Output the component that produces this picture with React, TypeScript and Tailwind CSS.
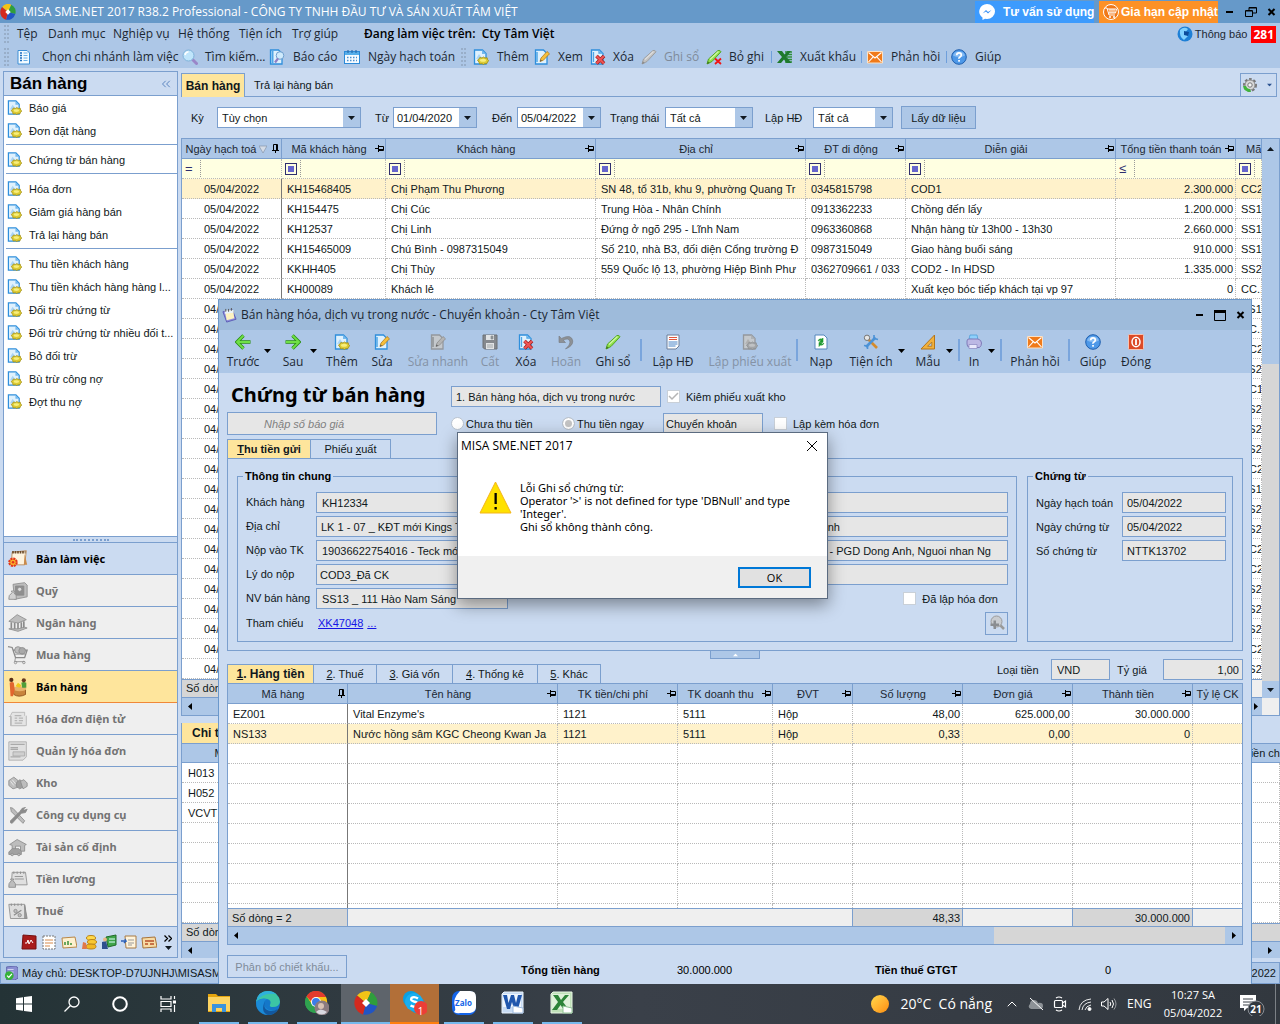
import React from 'react';
import {ChevronsLeft, ChevronUp} from "lucide-react";

type IconProps = { className?: string };

const DocBase = ({ gray }: { gray?: boolean }) => (
    <path d="M1.500 1h8l3.500 3.500v10.500h-11.500z" fill={gray ? '#c4c8cc' : '#dff1fd'} stroke={gray ? '#94989d' : '#2f8fdc'} strokeWidth="1.300"/>
);

const NewIcon = ({ className = 'size-4', gray }: IconProps & { gray?: boolean }) => (
    <svg className={`${className} shrink-0`} viewBox="0 0 16 16">
        <DocBase gray={gray}/>
        <path d="M9 1v4h4" fill={gray ? '#aeb2b6' : '#74b9ee'}/>
        <path d="M3 10l3-5 3 4" fill={gray ? '#b0b0b0' : '#a9d4f5'}/>
        <path d="M4.500 11l1.500-1 .8-1.500 2.200.5 1.500-1 1.500 1 2.200-.2.300 1.700 1.300 1.200-1.300 1.300-.5 1.500-2.500.3-1 .7-1.500-.8-2.500.2-.5-1.700z"
              fill={gray ? '#a2a5a8' : '#dccb34'} stroke={gray ? '#8b8e91' : '#a08c12'} strokeWidth=".8"/>
        <ellipse cx="10" cy="11.300" rx="3" ry="1.500" fill={gray ? '#c0c2c4' : '#f7ee7c'}/>
    </svg>
);

const EditIcon = ({ className = 'size-4', gray }: IconProps & { gray?: boolean }) => (
    <svg className={`${className} shrink-0`} viewBox="0 0 16 16">
        <DocBase gray={gray}/>
        <path d="M3 3v10" stroke={gray ? '#8c9094' : '#4fa6e6'} strokeWidth="1.500"/>
        <path d="M6 12.500l1-3.500 6-6.500 2.500 2.300-6.200 6.500z" fill={gray ? '#b4b4b4' : '#f6bf3a'} stroke={gray ? '#8b8b8b' : '#b07a1c'} strokeWidth=".8"/>
        <path d="M6 12.500l.6-2 1.400 1.300z" fill="#555"/>
    </svg>
);

const DeleteIcon = ({ className = 'size-4' }: IconProps) => (
    <svg className={`${className} shrink-0`} viewBox="0 0 16 16">
        <DocBase/>
        <path d="M3.500 3v10M9 1v3h4" stroke="#4fa6e6" fill="none" strokeWidth="1.300"/>
        <path d="M6.500 7l7.500 7.500M14 7l-7.500 7.500" stroke="#9c1b1b" strokeWidth="3.600"/>
        <path d="M6.500 7l7.500 7.500M14 7l-7.500 7.500" stroke="#ee5454" strokeWidth="2.200"/>
    </svg>
);

const PenIcon = ({ gray, cross }: { gray?: boolean; cross?: boolean }) => (
    <svg className="size-4 shrink-0" viewBox="0 0 16 16">
        <path d="M1 15l1.500-5L12 1.500q2-.7 3 1.300L6 12.500z" fill={gray ? '#c2c2c2' : '#8fe04a'} stroke={gray ? '#9a9a9a' : '#4c9f1c'} strokeWidth=".9"/>
        <path d="M4 10.500l8.500-8" stroke={gray ? '#dedede' : '#d0f7a6'} strokeWidth="1.200"/>
        <path d="M1 15l.8-2.800 2 1.700z" fill={gray ? '#8a8a8a' : '#3f7a1c'}/>
        {cross && <path d="M9 9.500l6 5.500M15 9.500L9 15" stroke="#f01414" strokeWidth="1.800"/>}
    </svg>
);

const MailIcon = () => (
    <svg className="size-4 shrink-0" viewBox="0 0 16 16">
        <path d="M.5 2.500h15v11.500H.5z" fill="#f07a1a" stroke="#fbe1c4"/>
        <path d="M1.500 3.500L8 9l6.500-5.500M1.500 13l4.700-5.200M14.500 13L9.800 7.800" fill="none" stroke="#fff" strokeWidth="1.100"/>
    </svg>
);

const HelpIcon = () => (
    <svg className="size-4 shrink-0" viewBox="0 0 16 16">
        <circle cx="8" cy="8" r="7.300" fill="#4d98e8" stroke="#1f5fae"/>
        <path d="M2 6.500a6.200 5.500 0 0 1 12 0q-6 3-12 0z" fill="#9bc9f8" opacity=".7"/>
        <path d="M5.700 6.300Q5.700 3.800 8 3.800t2.300 2.200q0 1.300-1.300 2T8 9.800" fill="none" stroke="#fff" strokeWidth="1.700"/>
        <rect x="7.200" y="11" width="1.700" height="1.700" fill="#fff"/>
    </svg>
);

const SearchIcon = () => (
    <svg className="size-4 shrink-0" viewBox="0 0 16 16">
        <path d="M10.500 10.500l4 4" stroke="#9a86c8" strokeWidth="3" strokeLinecap="round"/>
        <circle cx="6.500" cy="6.500" r="5.500" fill="#bfe5fb" stroke="#7fb2d9"/>
        <path d="M3 6q.5-3 3.500-3.300" fill="none" stroke="#fff" strokeWidth="1.600"/>
    </svg>
);

const BranchIcon = () => (
    <svg className="size-4 shrink-0" viewBox="0 0 16 16">
        <path d="M2 1.500h9l2.500 2.500v11H2z" fill="#f4fbff" stroke="#3d8fd6"/>
        <path d="M4 4h2M4 6.500h2M4 9h2M4 11.500h2" stroke="#1f6fc0" strokeWidth="1.400"/>
        <path d="M7.500 4h4M7.500 6.500h4M7.500 9h4M7.500 11.500h4" stroke="#69aee6"/>
    </svg>
);

const ReportIcon = () => (
    <svg className="size-4 shrink-0" viewBox="0 0 16 16">
        <DocBase/>
        <path d="M3.500 2v12" stroke="#4fa6e6" strokeWidth="2"/>
        <circle cx="11" cy="6.500" r="3.800" fill="#cfeafc" stroke="#6f9fce"/>
        <path d="M9 9.500l-3 4" stroke="#8f7fc4" strokeWidth="2.200"/>
    </svg>
);

const CalendarIcon = () => (
    <svg className="size-4 shrink-0" viewBox="0 0 16 16">
        <rect x=".5" y="2.500" width="15" height="12" fill="#f6fbff" stroke="#2c8ad8"/>
        <path d="M1 3h14v3H1z" fill="#56aeea"/>
        <path d="M4 1v3M8 1v3M12 1v3" stroke="#2c6cab" strokeWidth="1.200"/>
        <path d="M3 8.500h10M3 11.500h10" stroke="#4a90d0" strokeWidth="1.500" strokeDasharray="1.500 1.500"/>
    </svg>
);

const ExcelMark = () => (
    <svg className="size-4 shrink-0" viewBox="0 0 16 16">
        <path d="M8 3h7M9 5.500h6M10 8h5M9 10.500h6M8 13h7" stroke="#2f8f3a" strokeWidth="1.300"/>
        <path d="M0 2h5l2.500 3.500L10.500 2H14L9.500 8l5 6h-5L7 10.500 4 14H0l5-6z" fill="#1f7a2c"/>
    </svg>
);

const BackIcon = ({ flip }: { flip?: boolean }) => (
    <svg className="size-4" viewBox="0 0 16 16" fill="none">
        <path d={flip ? 'M0.500 8h13M7.500 1.500L14 8l-6.500 6.500' : 'M15.500 8H2.500M8.500 1.500L2 8l6.500 6.500'} stroke="#2b8f14" strokeWidth="3.400"/>
        <path d={flip ? 'M1 8h12.500M7.500 1.500L14 8l-6.500 6.500' : 'M15 8H2.500M8.500 1.500L2 8l6.500 6.500'} stroke="#6fe046" strokeWidth="1.800"/>
    </svg>
);

const SaveIcon = () => (
    <svg className="size-4" viewBox="0 0 16 16">
        <path d="M1 1h14v14H2.500L1 13.500z" fill="#85898e" stroke="#6c7075"/>
        <path d="M4 1h8v5H4zM4 9h8v6H4z" fill="#e1e3e5"/><path d="M9 2h2v3H9zM5 11h6M5 13h6" stroke="#8b8f94" fill="#8b8f94" strokeWidth=".7"/>
    </svg>
);

const UndoIcon = () => (
    <svg className="size-4" viewBox="0 0 16 16">
        <path d="M1 2v6.500h6.500L5.300 6.300Q11 3 12 8q.3 3-4.500 7Q15 12 14.800 7 13.500-.5 3.500 4.400z" fill="#8d9196" stroke="#75797e" strokeWidth=".6"/>
    </svg>
);

const InvoiceIcon = () => (
    <svg className="size-4" viewBox="0 0 16 16">
        <path d="M2 1h12v11l-3 3H2z" fill="#fdfdfd" stroke="#6c7f99"/>
        <path d="M4 3.500h8M4 5.500h8" stroke="#e0573d"/><path d="M3.500 8h9M3.500 10h9M3.500 12h7" stroke="#4a86c8"/>
    </svg>
);

const ReloadIcon = () => (
    <svg className="size-4" viewBox="0 0 16 16">
        <path d="M2 1h9l3 3v11H2z" fill="#fff" stroke="#5587bd"/>
        <path d="M5 7q1-3 4-2l1-1v4H6.500L8 6.500q-1.500-.5-3 .5zM11 9q-1 3-4 2l-1 1.500V8.500h3.500L8 10q1.500.5 3-1z" fill="#1f9a2f" stroke="#1f9a2f" strokeWidth=".6"/>
    </svg>
);

const ToolsIcon = () => (
    <svg className="size-4" viewBox="0 0 16 16">
        <path d="M4 4l10 10" stroke="#d58b2c" strokeWidth="2.600"/><path d="M12.500 3.500L3 13" stroke="#4c92d6" strokeWidth="2.600"/>
        <circle cx="4" cy="3.800" r="2.700" fill="#e6e6e6" stroke="#777"/><path d="M11 1v3.500l4 1M1 11.500l3.500.5v3" fill="none" stroke="#4c92d6" strokeWidth="1.600"/>
    </svg>
);

const RulerIcon = () => (
    <svg className="size-4" viewBox="0 0 16 16">
        <path d="M14.500 1v14H1z" fill="#f2b13c" stroke="#b3751a"/><path d="M11.800 8v4.300H7.500z" fill="#adc7e7" stroke="#b3751a" strokeWidth=".8"/>
    </svg>
);

const PrintIcon = () => (
    <svg className="size-4" viewBox="0 0 16 16">
        <path d="M3 5l1-4h7l1 5z" fill="#8fd0fb" stroke="#4f9ed8" strokeWidth=".8"/>
        <path d="M1 7q0-2 2-2h9q3.500 1 3.500 4t-2 4.500H4Q.8 13 1 10z" fill="#bcb8e4" stroke="#7f7bb8"/>
        <path d="M3 10.500h8v4H3z" fill="#e9e8fb" stroke="#8a86c0" strokeWidth=".7"/>
    </svg>
);

const PowerIcon = () => (
    <svg className="size-4" viewBox="0 0 16 16">
        <rect x=".5" y=".5" width="15" height="15" rx="1" fill="#dc4a26" stroke="#f7c4b3"/>
        <ellipse cx="8" cy="8" rx="4" ry="4.800" fill="none" stroke="#fff" strokeWidth="1.500"/><path d="M8 5v6" stroke="#fff" strokeWidth="1.800"/>
    </svg>
);

const MisaLogo = ({ className = 'size-4' }: IconProps) => (
    <svg className={`${className} shrink-0`} viewBox="0 0 24 24">
        <path d="M12 12L3 4.500A12 12 0 0 1 17 1z" fill="#f2c417"/>
        <path d="M12 12l5-11a12 12 0 0 1 6 14z" fill="#2f9e3c"/>
        <path d="M12 12l11 3a12 12 0 0 1-14 8.500z" fill="#2155c4"/>
        <path d="M12 12L9 23.500A12 12 0 0 1 3 4.500z" fill="#d42a1e"/>
        <path d="M12 8l4 4-4 4-4-4z" fill="#fff"/>
    </svg>
);

const Caret = ({ className = '' }: IconProps) => (
    <svg className={`h-1 w-[7px] shrink-0 ${className}`} viewBox="0 0 7 4"><path d="M0 0h7L3.500 4z" fill="currentColor"/></svg>
);

const SideCaret = ({ right }: { right?: boolean }) => (
    <svg className="h-[7px] w-1 shrink-0" viewBox="0 0 4 7"><path d={right ? 'M0 0v7l4-3.500z' : 'M4 0v7L0 3.500z'}/></svg>
);

const Pin = ({ up }: { up?: boolean }) => (
    <svg className="h-[9px] w-[9px] shrink-0" viewBox="0 0 9 9" fill="none" stroke="#000">
        {up ? <path d="M2.500 6V.5h4V6M1 6.500h7M4.500 6.500V9M5.500 1v5"/> : <path d="M0 4.500h3M3.500 1v7M3.500 2.500h5v4h-5M4 5.500h4.500"/>}
    </svg>
);

const Grip = () => (
    <span className="flex h-[18px] gap-[1px]"><span className="border-l-2 border-dotted border-[#98aec9]"/><span className="border-l-2 border-dotted border-[#98aec9]"/></span>
);

const sideGroups = [
    ['Báo giá', 'Đơn đặt hàng'],
    ['Chứng từ bán hàng'],
    ['Hóa đơn', 'Giảm giá hàng bán', 'Trả lại hàng bán'],
    ['Thu tiền khách hàng', 'Thu tiền khách hàng hàng l...', 'Đối trừ chứng từ', 'Đối trừ chứng từ nhiều đối t...', 'Bỏ đối trừ', 'Bù trừ công nợ', 'Đợt thu nợ'],
];

const g = { fill: '#bdbdbd', stroke: '#8b8b8b' };
const modules = [
    { name: 'Bàn làm việc', icon: <><path d="M5 4l17-2-2 17H4z" fill="#fdf3df" stroke="#b98550"/><path d="M5 4h16" stroke="#6a4a2a" strokeWidth="3" strokeDasharray="2 1"/><path d="M20 6l3 13h-4z" fill="#c98a4a"/><circle cx="6" cy="16" r="4.500" fill="#f9b52b" stroke="#e2341c" strokeWidth="2.500" strokeDasharray="2.500 1"/><circle cx="6" cy="16" r="1.500" fill="#e2341c"/></> },
    { name: 'Quỹ', icon: <g {...g}><path d="M6 4l14-2 3 3v14l-15 3z"/><path d="M9 6h10v11H9z" fill="#8f8f8f"/><circle cx="14" cy="10" r="2.500" fill="#ddd"/><path d="M4 12h4l-1 2q4 3 3 8H1q-1-5 4-8z" fill="#d2d2d2"/></g> },
    { name: 'Ngân hàng', icon: <g {...g}><path d="M1 10L11 2l11 6-10 4z"/><path d="M4 11v8M8 12v8M12 12v9M16 11v8M19 10v8" strokeWidth="2"/><path d="M1 19l11 3 11-4-3-1-8 2z"/></g> },
    { name: 'Mua hàng', icon: <g {...g} fill="none"><path d="M0 2l5 1 4 12h11l3-9H6" strokeWidth="1.500"/><circle cx="12" cy="6" r="4" fill="#bdbdbd"/><circle cx="17" cy="7" r="4" fill="#a9a9a9"/><path d="M9 15l-1 5h12M8 11h13"/><circle cx="9" cy="21" r="1.500"/><circle cx="19" cy="21" r="1.500"/></g> },
    { name: 'Bán hàng', icon: <><path d="M6 15q8-5 15 0v6q-8 4-14 0z" fill="#c8843c" stroke="#8b4e1a"/><ellipse cx="14" cy="14" rx="8" ry="3" fill="#e8b36c"/><path d="M2 7q3-2 5 0l1 8-2 8H3z" fill="#e2662e"/><circle cx="4" cy="3.500" r="2.500" fill="#5a2f17"/><path d="M9 11l3-4 4 3-2 3z" fill="#f0c81c"/><path d="M16 7q3-2 6 0v6h-5z" fill="#4f9e3a"/><circle cx="19" cy="4" r="2.500" fill="#6b3a1c"/></> },
    { name: 'Hóa đơn điện tử', icon: <g fill="#e4e4e4" stroke="#b5b5b5"><path d="M5 4h15v16H3V8z"/><path d="M1 9h3v11h18V8"/><path d="M8 8h8M8 11h3M13 11h5M8 14h3M13 14h5M8 17h9" strokeWidth="1.500"/></g> },
    { name: 'Quản lý hóa đơn', icon: <g fill="#e0e0e0" stroke="#aaa"><path d="M1 1h21v18l-4 4H1z"/><path d="M3 4h17M3 8h9M3 10h9M3 19h12" strokeWidth="1.500"/><path d="M6 13h14v5H6z" fill="#cfcfcf"/></g> },
    { name: 'Kho', icon: <g {...g}><path d="M1 9l6-4 5 4v8l-6 2-5-4z"/><path d="M10 12l4-4 4 3v6l-4 2-4-3z" fill="#9e9e9e"/><path d="M15 10l4-2 4 4v4l-5 3z"/><path d="M3 10l4 5M5 8l4 5" stroke="#eee"/></g> },
    { name: 'Công cụ dụng cụ', icon: <g {...g}><path d="M3 3l3 1 14 15-2 3L4 8z"/><path d="M21 3l-4 1-3 4-11 11q-1 3 2 3l11-12 5-1 2-4-3 1-2-1z" fill="#8a8a8a"/></g> },
    { name: 'Tài sản cố định', icon: <g {...g}><path d="M2 9l9-6 11 6-2 1v7H5v-7z"/><path d="M9 11h6v6H9z" fill="#eee"/><path d="M1 18l4-4h8l3 3v4H1z" fill="#a2a2a2"/><circle cx="5" cy="21" r="1.500"/><circle cx="13" cy="21" r="1.500"/></g> },
    { name: 'Tiền lương', icon: <g {...g}><path d="M5 4h16l2 15H4z" fill="#e0e0e0"/><path d="M7 3v3M11 3v3M15 3v3M19 3v3M8 9h10M8 12h11"/><path d="M3 12h4l-1 2q4 3 3 8H1q-1-5 3-8z"/></g> },
    { name: 'Thuế', icon: <g {...g}><path d="M1 4h19l2 17H3z" fill="#dedede"/><path d="M20 5l3 16h-3z" fill="#999"/><path d="M4 3v3M8 3v3M12 3v3M16 3v3"/><path d="M7 17l9-6" strokeWidth="1.500"/><circle cx="9" cy="12" r="2"/><circle cx="14" cy="17" r="2"/></g> },
];

const trayIcons = [
    <g key="a"><path d="M2 1l13 1v13H1z" fill="#a81c1c" stroke="#741010"/><path d="M4 9h2l1-3 1 4 2-4 2 3" stroke="#fff" fill="none"/></g>,
    <g key="b"><path d="M2 2h12v13H2z" fill="#fff" stroke="#777" strokeDasharray="2 1"/><path d="M4 6h8M4 9h8M4 12h5" stroke="#d78a4c"/></g>,
    <g key="c"><path d="M1 4l13-1 2 10-14 1z" fill="#fdf0cf" stroke="#b98748"/><path d="M4 11V8M7 11V7M10 11V9" stroke="#3a8e3a" strokeWidth="1.500"/></g>,
    <g key="d"><ellipse cx="10" cy="4" rx="4.500" ry="2.500" fill="#ffd94a" stroke="#b98318"/><ellipse cx="11" cy="8" rx="4.500" ry="2.500" fill="#f9c832" stroke="#b98318"/><ellipse cx="10" cy="12.500" rx="5" ry="2.500" fill="#f2b822" stroke="#b98318"/><path d="M1 15l1-7 3 1 1 6z" fill="#e0784a"/></g>,
    <g key="e"><path d="M5 3l10-2v10L7 13z" fill="#3fa64a" stroke="#226b2a"/><path d="M8 5h6M8 8h6" stroke="#dff"/><path d="M1 15V8l4-1 2 8z" fill="#2f4f8f"/><circle cx="4" cy="5.500" r="2" fill="#e8b988"/></g>,
    <g key="f"><path d="M4 2h11v12H5z" fill="#fff4dc" stroke="#a87a44"/><path d="M7 6h6M7 9h6M7 11h4" stroke="#999"/><path d="M0 7h5L4 5M5 7l-2 2" stroke="#2f62b8" strokeWidth="1.500" fill="none"/></g>,
    <g key="g"><path d="M1 4l13-1 2 10-14 1z" fill="#f7dba4" stroke="#a8743a"/><path d="M4 10h3M9 10h4M4 7h9" stroke="#b8502a" strokeWidth="1.500"/></g>,
];

const HomeMenu = () => (
    <header className="shrink-0 bg-[#adc7e7] font-['Open_Sans','Noto_Sans',sans-serif] text-[12px] text-[#1c2733]">
        <div className="flex h-[23px] items-center bg-[#6699c9] text-white">
            <MisaLogo className="size-4"/>
            <h1 className="ml-[7px] flex-1 truncate text-[12px]">MISA SME.NET 2017 R38.2 Professional - CÔNG TY TNHH ĐẦU TƯ VÀ SẢN XUẤT TÂM VIỆT</h1>
            <button className="flex h-[22px] w-[119px] shrink-0 items-center bg-[#3d9bfd] pl-1 font-['Liberation_Sans',sans-serif] font-bold whitespace-nowrap">
                <svg className="mr-2 size-4 shrink-0" viewBox="0 0 16 16">
                    <path d="M8 0a8 7.500 0 0 1 0 15l-2-.3L3.500 16v-2.500A8 7.500 0 0 1 8 0z" fill="#fff"/>
                    <path d="M3.500 9.500L7 6l2 2 3.500-2L9 9.500l-2-2z" fill="#2f8cf5"/>
                </svg>
                Tư vấn sử dụng
            </button>
            <button className="ml-[5px] flex h-[22px] w-[119px] shrink-0 items-center bg-[#fd9126] pl-1 font-['Liberation_Sans',sans-serif] font-bold whitespace-nowrap">
                <svg className="mr-[2px] size-4 shrink-0" viewBox="0 0 16 16" fill="none" stroke="#fff">
                    <circle cx="8" cy="8" r="7.500" fill="#f07818"/>
                    <path d="M2 4h2l2 7h6M4.500 5h9l-1 4H5.500M7 5v4M9 5v4M11 5v4"/><path d="M6 13h2M10 13h2" strokeWidth="1.600"/>
                </svg>
                Gia hạn cập nhật
            </button>
            <div className="flex w-[62px] items-center justify-between pl-2 pr-1">
                <button aria-label="Thu nhỏ"><svg className="h-3 w-2" viewBox="0 0 8 12"><path d="M0 6h7" stroke="#000" strokeWidth="2"/></svg></button>
                <button aria-label="Khôi phục"><svg className="size-3" viewBox="0 0 12 12" fill="none" stroke="#000"><path d="M4 4V1.500h7.500V7H8M.5 4.500h7v6h-7zM4 2h7M1 5h6"/></svg></button>
                <button aria-label="Đóng"><svg className="h-2 w-[9px]" viewBox="0 0 9 8"><path d="M1.500 1l6 6M7.500 1l-6 6" stroke="#000" strokeWidth="2"/></svg></button>
            </div>
        </div>
        <div className="flex h-[22px] items-center pl-1">
            <span className="w-[13px]"><Grip/></span>
            <button className="w-[31px] text-left">Tệp</button>
            <button className="w-[65px] whitespace-nowrap text-left">Danh mục</button>
            <button className="w-[65px] whitespace-nowrap text-left">Nghiệp vụ</button>
            <button className="w-[61px] whitespace-nowrap text-left">Hệ thống</button>
            <button className="w-[53px] whitespace-nowrap text-left">Tiện ích</button>
            <button className="w-[72px] whitespace-nowrap text-left">Trợ giúp</button>
            <span className="flex-1 whitespace-pre font-semibold text-black">Đang làm việc trên:  Cty Tâm Việt</span>
            <svg className="size-4" viewBox="0 0 16 16"><circle cx="8" cy="8" r="7.500" fill="#1d7fd6"/><path d="M3 4q4-4 8-1L8 7l3 3-4 4q-5-3-4-10z" fill="#7fd0ff"/><path d="M7 5l5 1-1 4-4-1z" fill="#0c4c9c"/></svg>
            <button className="ml-[2px] font-['Liberation_Sans',sans-serif] text-[11px]">Thông báo</button>
            <span className="mr-1 ml-1 bg-[#ff0000] px-[2px] text-[12px] leading-[17px] font-bold text-white">281</span>
        </div>
        <div className="flex h-[23px] items-center overflow-hidden whitespace-nowrap pl-1">
            <span className="w-3 shrink-0"><Grip/></span>
            <button className="flex w-[166px] items-center gap-[10px]"><BranchIcon/>Chọn chi nhánh làm việc</button>
            <button className="flex w-[87px] items-center gap-[7px]"><SearchIcon/>Tìm kiếm...</button>
            <button className="flex w-[75px] items-center gap-2"><ReportIcon/>Báo cáo</button>
            <button className="flex w-[117px] items-center gap-2"><CalendarIcon/>Ngày hạch toán</button>
            <span className="w-3 shrink-0"><Grip/></span>
            <button className="flex w-[61px] items-center gap-2"><NewIcon/>Thêm</button>
            <button className="flex w-[56px] items-center gap-2"><EditIcon/>Xem</button>
            <button className="flex w-[51px] items-center gap-[7px]"><DeleteIcon/>Xóa</button>
            <button className="flex w-[65px] items-center gap-[7px] text-[#7f8b9a]"><PenIcon gray/>Ghi sổ</button>
            <button className="flex w-[65px] items-center gap-[7px]"><PenIcon cross/>Bỏ ghi</button>
            <span className="h-3 w-[6px] border-l border-[#6f9fdb]"/>
            <button className="flex w-[84px] items-center gap-[7px]"><ExcelMark/>Xuất khẩu</button>
            <span className="h-3 w-[6px] border-l border-[#6f9fdb]"/>
            <button className="flex w-[79px] items-center gap-2"><MailIcon/>Phản hồi</button>
            <span className="h-3 w-[5px] border-l border-[#6f9fdb]"/>
            <button className="flex items-center gap-2"><HelpIcon/>Giúp</button>
        </div>
    </header>
);

const Sidebar = () => (
    <aside className="flex w-[175px] shrink-0 flex-col border border-[#7b9fce] bg-[#cbdbf1]">
        <div className="flex h-6 shrink-0 items-center justify-between border-b border-[#7b9fce] pl-[6px] pr-1">
            <h2 className="text-[17px] font-bold text-black">Bán hàng</h2>
            <ChevronsLeft className="size-[14px] text-[#4a78b8]" strokeWidth={1.500}/>
        </div>
        <div className="flex-1 overflow-hidden bg-white">
            {sideGroups.map((group, i) => (
                <ul key={i} className={i ? 'ml-[2px] border-t border-[#7b9fce] pt-[3px] pb-[2px]' : 'ml-[2px] pb-[2px]'}>
                    {group.map((item) => (
                        <li key={item}>
                            <a href="#" className="flex h-[23px] items-center gap-[7px] whitespace-nowrap pl-[1px]"><NewIcon className="size-[15px]"/>{item}</a>
                        </li>
                    ))}
                </ul>
            ))}
        </div>
        <div className="flex h-[6px] shrink-0 items-center justify-center border-t border-[#7b9fce]"><span className="w-9 border-b-2 border-dotted border-[#7b9fce]"/></div>
        <nav className="shrink-0 font-['Noto_Sans',sans-serif] text-[11px] font-bold">
            {modules.map(({ name, icon }, i) => (
                <a key={name} href="#" className={`flex h-8 items-center gap-2 border-t pl-1 ${i === 0 ? 'border-[#7b9fce] bg-[#cbdbf1] text-black' : i === 4 ? 'border-[#7b9fce] bg-[#fee59c] text-black' : i === 5 ? 'border-[#f08838] bg-[#efefef] text-[#737373]' : 'border-[#7b9fce] bg-[#efefef] text-[#737373]'}`}>
                    <svg className="size-5 overflow-visible" viewBox="0 0 24 24">{icon}</svg>{name}
                </a>
            ))}
        </nav>
        <div className="flex h-[31px] shrink-0 items-center gap-1 border-t border-[#7b9fce] pl-[17px]">
            {trayIcons.map((icon, i) => <svg key={i} className="size-4" viewBox="0 0 16 16">{icon}</svg>)}
            <button aria-label="Thêm mục" className="ml-[3px] flex flex-col items-center gap-1">
                <svg className="h-[7px] w-2" viewBox="0 0 8 7" fill="none" stroke="#000" strokeWidth="1.300"><path d="M.5.5l3 3-3 3M4.500.5l3 3-3 3"/></svg>
                <Caret/>
            </button>
        </div>
    </aside>
);

const DropButton = () => <span className="pointer-events-none flex w-[17px] items-center justify-center bg-[#adc7e7]"><Caret/></span>;

const Combo = ({ id, value, width }: { id: string; value: string; width: string }) => (
    <span className={`flex h-[21px] border border-[#7b9fce] bg-white ${width}`}>
        <select id={id} className="min-w-0 flex-1 appearance-none bg-white pl-1 outline-none"><option>{value}</option></select>
        <DropButton/>
    </span>
);

const DateBox = ({ id, value }: { id: string; value: string }) => (
    <span className="flex h-[21px] w-[84px] border border-[#7b9fce] bg-white">
        <input id={id} defaultValue={value} className="w-0 min-w-0 flex-1 pl-[3px] outline-none"/>
        <DropButton/>
    </span>
);

const codes = ['SS12', 'CC.1', 'CC21', 'SS29', 'CC11', 'SS20', 'SS29', 'SS29', 'CC21', 'SS14', 'SS29', 'SS29', 'CC21', 'CC21', 'SS28', 'SS29', 'SS29', 'CC21', 'SS29', 'CC21'];
const orders = [
    ['05/04/2022', 'KH15468405', 'Chị Phạm Thu Phương', 'SN 48, tổ 31b, khu 9, phường Quang Tr', '0345815798', 'COD1', '2.300.000', 'CC21'],
    ['05/04/2022', 'KH154475', 'Chị Cúc', 'Trung Hòa - Nhân Chính', '0913362233', 'Chồng đến lấy', '1.200.000', 'SS1'],
    ['05/04/2022', 'KH12537', 'Chị Linh', 'Đứng ở ngõ 295 - Lĩnh Nam', '0963360868', 'Nhận hàng từ 13h00 - 13h30', '2.660.000', 'SS12'],
    ['05/04/2022', 'KH15465009', 'Chú Bình - 0987315049', 'Số 210, nhà B3, đối diện Cổng trường Đ', '0987315049', 'Giao hàng buổi sáng', '910.000', 'SS12'],
    ['05/04/2022', 'KKHH405', 'Chị Thùy', '559 Quốc lộ 13, phường Hiệp Bình Phư', '0362709661 / 033', 'COD2 - In HDSD', '1.335.000', 'SS29'],
    ['05/04/2022', 'KH00089', 'Khách lẻ', '', '', 'Xuất kẹo bóc tiếp khách tại vp 97', '0', 'CC.1'],
    ...codes.map((code) => ['04/04/2022', '', '', '', '', '', '', code]),
];
const orderHeads = ['Ngày hạch toá', 'Mã khách hàng', 'Khách hàng', 'Địa chỉ', 'ĐT di động', 'Diễn giải', 'Tổng tiền thanh toán', 'Mã'];

const cell = 'h-5 overflow-hidden whitespace-nowrap border-b border-r border-dotted border-[#b9b9b9] py-0';

const OrderGrid = () => (
    <div className="flex h-[578px] shrink-0 border border-[#7b9fce]">
        <div className="flex min-w-0 flex-1 flex-col">
            <div className="min-h-0 flex-1 overflow-hidden bg-white">
                <table className="w-full table-fixed border-separate border-spacing-0">
                    <colgroup>
                        <col className="w-[100px]"/><col className="w-[104px]"/><col className="w-[210px]"/><col className="w-[210px]"/>
                        <col className="w-[100px]"/><col className="w-[210px]"/><col className="w-[120px]"/><col/>
                    </colgroup>
                    <thead>
                        <tr className="bg-[#adc7e7]">
                            {orderHeads.map((head, i) => (
                                <th key={head} className="h-5 overflow-hidden border-b border-r border-[#7b9fce] p-0 font-normal text-[#1c2733]">
                                    <div className={`flex items-center whitespace-nowrap pr-[1px] ${i === 7 ? 'pl-[10px] text-left' : 'pl-[1px]'}`}>
                                        <span className="flex-1">{head}</span>
                                        {i === 0 && <svg className="mr-1 h-2 w-2" viewBox="0 0 8 8"><path d="M0 1h8L4 8z" fill="#d5dce6" stroke="#8797aa" strokeWidth=".7"/></svg>}
                                        {i < 7 && <Pin up={i === 0}/>}
                                    </div>
                                </th>
                            ))}
                        </tr>
                        <tr className="bg-[#ffffe1]">
                            {orderHeads.map((head, i) => (
                                <td key={head} className={`${cell} px-[3px]`}>
                                    <div className="flex h-[17px] w-4 items-center border-r border-dotted border-[#999] text-[13px] text-[#2e2e6e]">
                                        {i === 0 ? '=' : i === 6 ? '≤' : <span className="size-3 shrink-0 border border-[#2e2e6e] bg-[#6666cc] bg-clip-content p-[2px]"/>}
                                    </div>
                                </td>
                            ))}
                        </tr>
                    </thead>
                    <tbody>
                        {orders.map((row, r) => (
                            <tr key={r} className={r === 0 ? 'bg-[#fff2cb]' : 'bg-white'}>
                                {row.map((value, i) => (
                                    <td key={i} className={`${cell} ${i === 0 ? 'border-r-[#777] [border-right-style:solid] text-center' : i === 6 ? 'pr-[2px] text-right' : 'pl-[5px]'}`}>{value}</td>
                                ))}
                            </tr>
                        ))}
                    </tbody>
                </table>
            </div>
            <div className="flex h-[18px] shrink-0 items-center border-t border-[#7b9fce] bg-[#efefef]">
                <span className="h-full w-[99px] bg-[#d6d6d6] pl-1">Số dòng = 213</span>
            </div>
            <div className="flex h-[18px] shrink-0 items-center justify-between border-t border-[#7b9fce] bg-[#adc7e7] pl-[6px] pr-1">
                <SideCaret/><SideCaret right/>
            </div>
        </div>
        <div className="flex w-[17px] shrink-0 flex-col bg-[#d6d6d6]">
            <div className="flex h-[225px] justify-center bg-[#adc7e7] pt-2"><Caret className="rotate-180"/></div>
            <div className="flex-1"/>
            <div className="flex h-[17px] items-center justify-center bg-[#adc7e7]"><Caret/></div>
            <div className="h-[17px] bg-[#efefef]"/>
        </div>
    </div>
);

const DetailGrid = () => (
    <section className="mt-[7px] flex flex-1 flex-col overflow-hidden border-l border-[#7b9fce]">
        <div className="flex h-5 shrink-0"><button className="w-[84px] bg-[#fee59c] pl-[10px] text-left text-[12px] font-bold">Chi tiết</button></div>
        <table className="w-full table-fixed border-separate border-spacing-0 bg-white">
            <colgroup><col className="w-[108px]"/><col/><col className="w-[80px]"/></colgroup>
            <thead>
                <tr className="bg-[#adc7e7]">
                    <th className="h-5 border-y border-[#7b9fce] p-0 font-normal">Mã hàng</th><th className="border-y border-[#7b9fce] p-0"/>
                    <th className="whitespace-nowrap border-y border-[#7b9fce] p-0 text-right font-normal">Tiền ch</th>
                </tr>
            </thead>
            <tbody>
                {['H013', 'H052', 'VCVT', '', '', '', '', ''].map((code, i) => (
                    <tr key={i}><td className={`${cell} pl-[6px]`}>{code}</td><td className={cell}/><td className={cell}/></tr>
                ))}
            </tbody>
        </table>
        <div className="h-[18px] shrink-0 border-t border-[#7b9fce] bg-[#d6d6d6] pl-1">Số dòng = 3</div>
        <div className="flex h-[18px] shrink-0 items-center justify-between border-y border-[#7b9fce] bg-[#adc7e7] pl-[6px] pr-2"><SideCaret/><SideCaret right/></div>
    </section>
);

const SalesList = () => (
    <main className="flex min-w-0 flex-1 flex-col">
        <div className="flex h-[26px] shrink-0 items-end">
            <button className="h-6 w-16 border border-b-0 border-[#7b9fce] bg-[#fee59c] text-[12px] font-bold whitespace-nowrap">Bán hàng</button>
            <button className="h-6 flex-1 border-b border-[#7b9fce] pl-[9px] text-left">Trả lại hàng bán</button>
            <button aria-label="Tùy chọn" className="mr-[3px] flex h-6 w-[37px] items-center gap-2 border border-[#7b9fce] pl-[1px] text-[#2a5290]">
                <svg className="size-4" viewBox="0 0 16 16">
                    <circle cx="8" cy="8" r="5" fill="#d9d9d9" stroke="#777" strokeWidth="4" strokeDasharray="2.200 1.500"/>
                    <circle cx="8" cy="8" r="5" fill="#d9d9d9" stroke="#8a8a8a"/><circle cx="8" cy="8" r="2.200" fill="#f5f5f5" stroke="#777"/>
                    <path d="M1 9q1 6 8 6l-1-3q-3 0-4-3z" fill="#3fb53a"/>
                </svg>
                <Caret className="scale-75"/>
            </button>
        </div>
        <div className="flex h-[41px] shrink-0 items-center">
            <label htmlFor="period" className="w-9 pl-[10px]">Kỳ</label><Combo id="period" value="Tùy chọn" width="w-36"/>
            <label htmlFor="from" className="w-8 pl-[14px]">Từ</label><DateBox id="from" value="01/04/2020"/>
            <label htmlFor="to" className="w-10 pl-[15px]">Đến</label><DateBox id="to" value="05/04/2022"/>
            <label htmlFor="status" className="w-16 whitespace-nowrap pl-[9px]">Trạng thái</label><Combo id="status" value="Tất cả" width="w-[88px]"/>
            <label htmlFor="invoice" className="w-[60px] whitespace-nowrap pl-3">Lập HĐ</label><Combo id="invoice" value="Tất cả" width="w-20"/>
            <button className="ml-2 h-[23px] w-[75px] border border-[#7b9fce] bg-[#adc7e7]">Lấy dữ liệu</button>
        </div>
        <OrderGrid/>
        <DetailGrid/>
    </main>
);

const tools = [
    { label: 'Trước', icon: <BackIcon/>, width: 'w-[42px]', caret: true },
    { label: 'Sau', icon: <BackIcon flip/>, width: 'w-[34px]', caret: true },
    { label: 'Thêm', icon: <NewIcon/>, width: 'w-10' },
    { label: 'Sửa', icon: <EditIcon/>, width: 'w-10' },
    { label: 'Sửa nhanh', icon: <EditIcon gray/>, width: 'w-[72px]', off: true },
    { label: 'Cất', icon: <SaveIcon/>, width: 'w-8', off: true },
    { label: 'Xóa', icon: <DeleteIcon/>, width: 'w-10' },
    { label: 'Hoãn', icon: <UndoIcon/>, width: 'w-10', off: true },
    { label: 'Ghi sổ', icon: <PenIcon/>, width: 'w-[54px]', line: true },
    { label: 'Lập HĐ', icon: <InvoiceIcon/>, width: 'w-[62px]' },
    { label: 'Lập phiếu xuất', icon: <NewIcon gray/>, width: 'w-[92px]', off: true, line: true },
    { label: 'Nạp', icon: <ReloadIcon/>, width: 'w-[46px]' },
    { label: 'Tiện ích', icon: <ToolsIcon/>, width: 'w-[54px]', caret: true },
    { label: 'Mẫu', icon: <RulerIcon/>, width: 'w-9', caret: true, line: true },
    { label: 'In', icon: <PrintIcon/>, width: 'w-7', caret: true, line: true },
    { label: 'Phản hồi', icon: <MailIcon/>, width: 'w-[66px]', line: true },
    { label: 'Giúp', icon: <HelpIcon/>, width: 'w-[46px]' },
    { label: 'Đóng', icon: <PowerIcon/>, width: 'w-10' },
];

const field = 'h-[21px] min-w-0 border border-[#7b9fce] bg-[#e6e6e6] px-1 outline-none';

const Tick = ({ label, checked }: { label: string; checked?: boolean }) => (
    <label className="flex items-center gap-[6px] whitespace-nowrap">
        <span className="relative flex size-[13px] items-center justify-center">
            <input type="checkbox" defaultChecked={checked} className="size-[13px] appearance-none border border-[#c9d0d8] bg-white"/>
            {checked && <svg className="pointer-events-none absolute size-[11px]" viewBox="0 0 11 11"><path d="M1 5l3 3 6-6" fill="none" stroke="#b5b5b5" strokeWidth="1.500"/></svg>}
        </span>
        {label}
    </label>
);

const RadioItem = ({ label, checked }: { label: string; checked?: boolean }) => (
    <label className="flex items-center gap-[2px] whitespace-nowrap">
        <input type="radio" name="payment" defaultChecked={checked} className="size-[13px] appearance-none rounded-full border border-[#b9c3cf] bg-white checked:shadow-[inset_0_0_0_2px_#fff] checked:bg-[#c4c4c4]"/>{label}
    </label>
);

const itemHeads = ['Mã hàng', 'Tên hàng', 'TK tiền/chi phí', 'TK doanh thu', 'ĐVT', 'Số lượng', 'Đơn giá', 'Thành tiền', 'Tỷ lệ CK'];
const items = [
    ['EZ001', "Vital Enzyme's", '1121', '5111', 'Hộp', '48,00', '625.000,00', '30.000.000', ''],
    ['NS133', 'Nước hồng sâm KGC Cheong Kwan Ja', '1121', '5111', 'Hộp', '0,33', '0,00', '0', ''],
    ...Array.from({ length: 9 }, () => ['', '', '', '', '', '', '', '', '']),
];

const ItemCols = () => (
    <colgroup>
        <col className="w-[120px]"/><col className="w-[210px]"/><col className="w-[120px]"/><col className="w-[95px]"/><col className="w-20"/>
        <col className="w-[110px]"/><col className="w-[110px]"/><col className="w-[120px]"/><col/>
    </colgroup>
);

const ItemGrid = () => (
    <div className="mx-2 flex flex-1 flex-col overflow-hidden border border-[#7b9fce]">
        <div className="min-h-0 flex-1 overflow-hidden bg-white">
            <table className="w-full table-fixed border-separate border-spacing-0">
                <ItemCols/>
                <thead>
                    <tr className="bg-[#adc7e7]">
                        {itemHeads.map((head, i) => (
                            <th key={head} className="h-5 overflow-hidden border-b border-r border-[#7b9fce] p-0 font-normal text-[#1c2733] last:border-r-0">
                                <div className="flex items-center whitespace-nowrap px-[1px]"><span className="flex-1">{head}</span>{i < 8 && <Pin up={i === 0}/>}</div>
                            </th>
                        ))}
                    </tr>
                </thead>
                <tbody>
                    {items.map((row, r) => (
                        <tr key={r} className={r === 1 ? 'bg-[#fff2cb]' : 'bg-white'}>
                            {row.map((value, i) => (
                                <td key={i} className={`${cell} last:border-r-0 ${i === 0 ? 'border-r-[#777] [border-right-style:solid]' : ''} ${i > 4 ? 'pr-[2px] text-right' : 'pl-[5px]'}`}>{value}</td>
                            ))}
                        </tr>
                    ))}
                </tbody>
            </table>
        </div>
        <table className="w-full shrink-0 table-fixed border-separate border-spacing-0 bg-[#efefef]">
            <ItemCols/>
            <tbody>
                <tr>
                    <td className="h-[18px] border-t border-r border-[#7b9fce] bg-[#d6d6d6] p-0 pl-1">Số dòng = 2</td>
                    <td colSpan={4} className="border-t border-r border-[#7b9fce] p-0"/>
                    <td className="border-t border-r border-[#7b9fce] bg-[#d6d6d6] p-0 pr-[2px] text-right">48,33</td>
                    <td className="border-t border-r border-[#7b9fce] p-0"/>
                    <td className="border-t border-r border-[#7b9fce] bg-[#d6d6d6] p-0 pr-[2px] text-right">30.000.000</td>
                    <td className="border-t border-[#7b9fce] p-0"/>
                </tr>
            </tbody>
        </table>
        <div className="flex h-[18px] shrink-0 items-stretch border-t border-[#7b9fce] bg-[#d6d6d6]">
            <div className="flex w-[766px] items-center bg-[#adc7e7] pl-[6px]"><SideCaret/></div>
            <div className="flex-1"/>
            <div className="flex w-[17px] items-center justify-center bg-[#adc7e7]"><SideCaret right/></div>
        </div>
    </div>
);

const SaleWindow = () => (
    <section className="absolute top-[299px] right-7 bottom-0 left-[218px] flex flex-col border border-b-0 border-[#6b98cb] bg-[#cbdbf1]">
        <div className="flex h-[30px] shrink-0 items-center bg-[#9ebbdb] pl-[3px] font-['Open_Sans','Noto_Sans',sans-serif] text-[12px] text-[#1c2733]">
            <svg className="mr-1 size-[15px]" viewBox="0 0 16 16"><path d="M1 4l10-2 4 10-10 3z" fill="#8f8fdd" stroke="#5d5db5"/><path d="M3 3l9-1 1 9-8 2z" fill="#fdf3c0"/><path d="M3 3l9-1v3l-9 1z" fill="#e9f3fb"/><path d="M4 1v3M7 1v3M10 0v3" stroke="#555"/></svg>
            <h2 className="flex-1 truncate">Bán hàng hóa, dịch vụ trong nước - Chuyển khoản - Cty Tâm Việt</h2>
            <div className="flex items-center gap-[10px] pr-[6px]">
                <button aria-label="Thu nhỏ"><svg className="h-3 w-2" viewBox="0 0 8 12"><path d="M0 6h7" stroke="#000" strokeWidth="2"/></svg></button>
                <button aria-label="Phóng to"><svg className="h-[11px] w-3" viewBox="0 0 12 11"><path d="M.5 1h11v9.500H.5z" fill="none" stroke="#000"/><path d="M0 0h12v3H0z"/></svg></button>
                <button aria-label="Đóng"><svg className="h-2 w-[9px]" viewBox="0 0 9 8"><path d="M1.500 1l6 6M7.500 1l-6 6" stroke="#000" strokeWidth="2"/></svg></button>
            </div>
        </div>
        <div className="flex h-[43px] shrink-0 items-start overflow-hidden bg-[#adc7e7] pt-1 pl-[3px] font-['Open_Sans','Noto_Sans',sans-serif] text-[12px] text-[#1c2733]">
            {tools.map(({ label, icon, width, caret, off, line }) => (
                <React.Fragment key={label}>
                    <button disabled={off} className={`flex shrink-0 flex-col items-center whitespace-nowrap leading-5 disabled:text-[#8492a5] ${width}`}>{icon}<span className="mt-[2px]">{label}</span></button>
                    {caret && <Caret className="mt-[15px] mr-[5px] text-black"/>}
                    {line && <span className="mt-[5px] h-[22px] w-[2px] shrink-0 bg-[#7aa5dc]"/>}
                </React.Fragment>
            ))}
        </div>
        <div className="flex h-[66px] shrink-0 pt-[9px] pl-2">
            <div className="w-[224px]">
                <h1 className="mb-[5px] pl-1 font-['Noto_Sans',sans-serif] text-[20px] leading-[25px] font-bold whitespace-nowrap text-black">Chứng từ bán hàng</h1>
                <input aria-label="Số báo giá" placeholder="Nhập số báo giá" className="h-[23px] w-[210px] border border-[#7b9fce] bg-[#e6e6e6] pl-9 italic outline-none placeholder:text-[#7f7f7f]"/>
            </div>
            <div className="flex flex-col gap-[6px] pt-1">
                <div className="flex items-center gap-[6px]">
                    <input aria-label="Loại chứng từ" readOnly value="1. Bán hàng hóa, dịch vụ trong nước" className={`${field} w-[210px]`}/>
                    <Tick label="Kiêm phiếu xuất kho" checked/>
                </div>
                <div className="flex items-center">
                    <div className="w-[111px]"><RadioItem label="Chưa thu tiền"/></div>
                    <div className="w-[101px]"><RadioItem label="Thu tiền ngay" checked/></div>
                    <input aria-label="Hình thức" readOnly value="Chuyển khoản" className={`${field} mr-[11px] w-[100px] px-[2px]`}/>
                    <Tick label="Lập kèm hóa đơn"/>
                </div>
            </div>
        </div>
        <div className="mx-2 flex h-[19px] shrink-0 items-stretch">
            <button className="w-[84px] border border-b-0 border-[#7b9fce] bg-[#fee59c] font-bold whitespace-nowrap"><u>T</u>hu tiền gửi</button>
            <button className="w-20 border-t border-r border-[#7b9fce]">Phiếu <u>x</u>uất</button>
        </div>
        <div className="mx-2 flex h-[193px] shrink-0 gap-[10px] border border-[#7b9fce] px-[9px] pt-[9px] pb-2">
            <fieldset className="min-w-0 flex-1 border border-[#7b9fce] px-2 pb-0">
                <legend className="-ml-[3px] px-[2px] leading-4 font-bold text-black">Thông tin chung</legend>
                <div className="flex flex-col gap-[3px] pt-[8px]">
                    <div className="flex"><label htmlFor="cust" className="w-[70px] leading-[21px]">Khách hàng</label><input id="cust" readOnly value="KH12334" className={`${field} w-48 px-[5px]`}/><input aria-label="Tên khách hàng" className={`${field} ml-[2px] flex-1`}/></div>
                    <div className="flex"><label htmlFor="addr" className="w-[70px] leading-[21px]">Địa chỉ</label><input id="addr" readOnly value="LK 1 - 07 _ KĐT mới Kings Town" className={`${field} w-48 border-r-0`}/><input aria-label="Địa chỉ (tiếp)" readOnly value="Đông Anh" className={`${field} flex-1 border-l-0 pr-[167px] text-right`}/></div>
                    <div className="flex"><label htmlFor="acct" className="w-[70px] leading-[21px]">Nộp vào TK</label><input id="acct" readOnly value="19036622754016 - Teck mới" className={`${field} w-48 px-[5px]`}/><input aria-label="Ngân hàng" readOnly value="- PGD Dong Anh, Nguoi nhan Ng" className={`${field} ml-[2px] flex-1 pr-4 text-right`}/></div>
                    <div className="flex"><label htmlFor="reason" className="w-[70px] leading-[21px]">Lý do nộp</label><input id="reason" readOnly value="COD3_Đã CK" className={`${field} flex-1 px-[3px]`}/></div>
                    <div className="flex items-center"><label htmlFor="staff" className="w-[70px] whitespace-nowrap leading-[21px]">NV bán hàng</label><input id="staff" readOnly value="SS13 _ 111 Hào Nam Sáng" className={`${field} w-48 px-[5px]`}/><span className="flex-1"/><span className="pr-[10px]"><Tick label="Đã lập hóa đơn"/></span></div>
                    <div className="flex h-[22px] items-center">
                        <span className="w-[70px]">Tham chiếu</span><a href="#" className="px-[2px] text-[#1414e6] underline">XK47048</a><a href="#" className="pl-[2px] text-[#1414e6] underline">...</a>
                        <span className="flex-1"/>
                        <button aria-label="Xem chi tiết" className="flex size-[23px] items-center justify-center border border-[#7b9fce]">
                            <svg className="size-4" viewBox="0 0 16 16"><path d="M11 10l4 4" stroke="#9a9a9a" strokeWidth="2.500"/><circle cx="7.500" cy="6.500" r="5.500" fill="#c9ccd0" stroke="#9a9a9a"/><path d="M3.500 9h3V6h2.500v3h3v2.500H9v3H6.500v-3h-3z" transform="translate(-2 -.5)" fill="#8a8d91"/></svg>
                        </button>
                    </div>
                </div>
            </fieldset>
            <fieldset className="w-[206px] shrink-0 border border-[#7b9fce] pr-[6px] pb-0 pl-2">
                <legend className="-ml-[3px] px-[2px] leading-4 font-bold text-black">Chứng từ</legend>
                <div className="flex flex-col gap-[3px] pt-[8px]">
                    {[['Ngày hạch toán', '05/04/2022'], ['Ngày chứng từ', '05/04/2022'], ['Số chứng từ', 'NTTK13702']].map(([label, value]) => (
                        <label key={label} className="flex items-center whitespace-nowrap"><span className="w-[86px]">{label}</span><input readOnly value={value} className={`${field} w-[104px]`}/></label>
                    ))}
                </div>
            </fieldset>
        </div>
        <div className="flex h-[8px] shrink-0 justify-center"><button aria-label="Thu gọn" className="flex h-[8px] w-[50px] items-center justify-center border border-t-0 border-[#7b9fce] bg-[#adc7e7] text-white"><Caret className="rotate-180 scale-75"/></button></div>
        <div className="mx-2 flex h-[24px] shrink-0 items-end">
            <button className="h-[19px] w-[87px] border border-b-0 border-[#7b9fce] bg-[#fee59c] text-[12px] font-bold whitespace-nowrap"><u>1</u>. Hàng tiền</button>
            <button className="h-[19px] w-[63px] border-t border-r border-[#7b9fce]"><u>2</u>. Thuế</button>
            <button className="h-[19px] w-[76px] border-t border-r border-[#7b9fce]"><u>3</u>. Giá vốn</button>
            <button className="h-[19px] w-[85px] border-t border-r border-[#7b9fce]"><u>4</u>. Thống kê</button>
            <button className="h-[19px] w-[63px] border-t border-r border-[#7b9fce]"><u>5</u>. Khác</button>
            <div className="mb-[3px] flex flex-1 items-center justify-end">
                <label htmlFor="currency" className="w-[54px]">Loại tiền</label><input id="currency" readOnly value="VND" className={`${field} w-[59px] px-[5px]`}/>
                <label htmlFor="rate" className="w-[53px] pl-[7px]">Tỷ giá</label><input id="rate" readOnly value="1,00" className={`${field} w-20 px-[3px] text-right`}/>
            </div>
        </div>
        <ItemGrid/>
        <footer className="flex h-[39px] shrink-0 items-center pl-2 text-black">
            <div className="w-[294px] pt-1"><button disabled className="h-[23px] w-[120px] border border-[#7b9fce] text-[#7f8b9a]">Phân bổ chiết khấu...</button></div>
            <strong className="w-[156px] pt-[11px]">Tổng tiền hàng</strong><span className="w-[198px] pt-[11px]">30.000.000</span>
            <strong className="w-[230px] pt-[11px]">Tiền thuế GTGT</strong><span className="pt-[11px]">0</span>
        </footer>
    </section>
);

const MessageBox = () => (
    <div role="alertdialog" className="absolute top-[432px] left-[457px] flex w-[371px] flex-col border border-[#5b6b80] bg-white text-black shadow-[0_6px_16px_rgba(0,0,0,0.4)]">
        <div className="flex h-[25px] items-center justify-between pr-[9px] pl-[3px] font-['Open_Sans','Noto_Sans',sans-serif] text-[12px]">
            <span>MISA SME.NET 2017</span>
            <button aria-label="Đóng"><svg className="size-3" viewBox="0 0 12 12"><path d="M1 1l10 10M11 1L1 11" stroke="#000"/></svg></button>
        </div>
        <div className="flex h-[98px] gap-[8px] pt-[23px] pl-[21px] font-['Noto_Sans',sans-serif] text-[11px] leading-[13px]">
            <svg className="size-[33px] shrink-0" viewBox="0 0 33 33"><path d="M16.500 1L32 32H1z" fill="#ffe100" stroke="#f3b51b" strokeLinejoin="round"/><path d="M15.500 12h2.300v11h-2.300zM15.500 26h2.300v2.500h-2.300z"/></svg>
            <p>Lỗi Ghi sổ chứng từ:<br/>Operator '&gt;' is not defined for type 'DBNull' and type<br/>'Integer'.<br/>Ghi sổ không thành công.</p>
        </div>
        <div className="flex h-[42px] items-center justify-end bg-[#f0f0f0] pr-4">
            <button className="h-[21px] w-[73px] border-2 border-[#0078d7] bg-[#e1e1e1] font-['Open_Sans',sans-serif] text-[11px] leading-none">OK</button>
        </div>
    </div>
);

const apps = [
    { name: 'File Explorer', bar: 'bg-[#76b9ed]', icon: <><path d="M1 3h8l2 2h12v16H1z" fill="#e5a50e"/><path d="M1 6h22v14H1z" fill="#fcd462"/><path d="M5 21v-8h14v8h-4v-4H9v4z" fill="#3a93dc"/></> },
    { name: 'Edge', bar: 'bg-[#76b9ed]', icon: <><circle cx="12" cy="12" r="12" fill="#1477c9"/><path d="M0 11Q2 0 12 0q11 1 12 11-1 5-7 5-4 0-3-2 2-5-3-6Q4 7 0 11z" fill="#3cc6a4"/><path d="M0 11Q2 0 12 0q5 0 8 3Q6 1 0 11z" fill="#2fb0dc"/><path d="M0 11q5-5 11-3-5 3-2 8 4 5 12 3-5 6-12 4.500Q0 21 0 11z" fill="#1b8ad6"/><path d="M9 10q-3 9 6 10 4 0 7-2-3 6-10 6-8-3-3-14z" fill="#12589f"/></> },
    { name: 'Chrome', bar: 'bg-[#76b9ed]', icon: <><circle cx="11" cy="11" r="11" fill="#2fa24f"/><path d="M1.500 5.500A11 11 0 0 1 21 6H11z" fill="#e33b2e"/><path d="M1.500 5.500L7 14l4-8h10a11 11 0 0 1-10 16l5-9z" fill="#fbc116"/><path d="M1.500 5.500A11 11 0 0 0 11 22l4-7H8z" fill="#2fa24f"/><path d="M1.500 5.500A11 11 0 0 1 20.500 6H11l-4 5z" fill="#e33b2e"/><circle cx="11" cy="11" r="5" fill="#fff"/><circle cx="11" cy="11" r="4" fill="#3b7de8"/><circle cx="17" cy="17" r="7.500" fill="#8b7b80"/><circle cx="16" cy="15" r="3" fill="#d9c2b4"/><path d="M11 21q4-5 11 0-5 5-11 0z" fill="#d8d8e0"/></> },
    { name: 'MISA', bar: 'bg-[#76b9ed]', icon: null },
    { name: 'Skype', bar: 'bg-[#ff7f0e]', icon: <><circle cx="8" cy="8" r="8" fill="#0b9fe0"/><circle cx="14" cy="14" r="8" fill="#0b9fe0"/><circle cx="11" cy="11" r="9" fill="#18aef0"/><path d="M15 7.500q-4-2.500-6.500-.5-1.500 2.500 2.500 3.500 5 1 3.500 4-2.500 2.500-7 0" fill="none" stroke="#fff" strokeWidth="2.400"/><circle cx="18" cy="17" r="7" fill="#ec3e36"/></> },
    { name: 'Zalo', bar: 'bg-[#76b9ed]', icon: <><rect width="24" height="24" rx="7" fill="#1464e8"/><path d="M8 0h10q6 0 6 6v10q0 5-6 6H8Q5 23 2 21q2-2 1-5Q0 8 8 0z" fill="#fff"/></> },
    { name: 'Word', bar: 'bg-[#76b9ed]', icon: <><path d="M3 1h19v21H1V3z" fill="#c7dbf3" stroke="#eaf3fc"/><path d="M2 3h18v13H2z" fill="#eef5fd"/><path d="M2 4h4l1.500 8L10 4h3l2 8 2-8h4l-4 14h-4l-2-7-2 7H6z" fill="#1f56ad"/><path d="M12 15l10 2v5H12z" fill="#fff" stroke="#9bb9de"/></> },
    { name: 'Excel', bar: 'bg-[#76b9ed]', icon: <><path d="M3 1h19v21H1V3z" fill="#bfe0b8" stroke="#e9f7e6"/><path d="M2 3h18v15H2z" fill="#dff1da"/><path d="M3 4h5l3 5 4-5h4l-6 7 6 8h-5l-3.500-5L7 19H2l6-8z" fill="#2c8338"/><path d="M13 15l9 2v5h-9z" fill="#fff" stroke="#8fc295"/></> },
];

const Taskbar = () => (
    <footer className="flex h-10 shrink-0 items-stretch bg-linear-to-r from-[#243336] via-[#3a4049] to-[#32383f] font-['Open_Sans','Noto_Sans',sans-serif] text-white">
        <button aria-label="Start" className="flex w-12 items-center justify-center"><svg className="size-4" viewBox="0 0 16 16" fill="#fff"><path d="M0 2.200L7 1.200v6.400H0zM8 1.100L16 0v7.600H8zM0 8.400h7v6.400l-7-1zM8 8.400h8V16l-8-1.100z"/></svg></button>
        <button aria-label="Search" className="flex w-12 items-center justify-center"><svg className="size-4" viewBox="0 0 16 16" fill="none" stroke="#fff" strokeWidth="1.300"><circle cx="10" cy="6" r="5"/><path d="M6.500 9.500L.5 15.500"/></svg></button>
        <button aria-label="Cortana" className="flex w-12 items-center justify-center"><svg className="size-4" viewBox="0 0 16 16"><circle cx="8" cy="8" r="6.800" fill="none" stroke="#fff" strokeWidth="2"/></svg></button>
        <button aria-label="Task View" className="mr-[2px] flex w-12 items-center justify-center"><svg className="size-4" viewBox="0 0 16 16" fill="none" stroke="#fff" strokeWidth="1.200"><path d="M1 0v3h10V0M1 16v-3h10v3M1 5.500h10v5H1zM14.500 0v3M14.500 9v7"/><path d="M13.500 5h2v2h-2z" fill="#fff"/></svg></button>
        {apps.map(({ name, bar, icon }) => (
            <button key={name} aria-label={name} className={`flex w-[49px] flex-col items-center ${name === 'MISA' ? 'bg-[#5e646b]' : name === 'Skype' ? 'bg-[#b26f38]' : ''}`}>
                <span className="relative flex flex-1 items-center justify-center">
                    {icon ? <svg className="size-6" viewBox="0 0 24 24">{icon}</svg> : <MisaLogo className="size-6"/>}
                    {name === 'Zalo' && <span className="absolute text-[8px] font-bold text-[#1464e8]">Zalo</span>}
                    {name === 'Skype' && <span className="absolute right-[3px] bottom-[5px] text-[10px] leading-3">1</span>}
                </span>
                <span className={`h-[2px] ${name === 'MISA' || name === 'Skype' ? 'w-full' : 'w-10'} ${bar}`}/>
            </button>
        ))}
        <div className="flex flex-1 items-center justify-end">
            <span className="mr-[11px] size-[18px] rounded-full bg-linear-to-br from-[#ffd84a] to-[#fb8c0a]"/>
            <span className="mr-3 whitespace-pre text-[14px]">20°C  Có nắng</span>
            <ChevronUp className="mr-2 size-4" strokeWidth={1.500}/>
            <svg className="mr-2 h-4 w-4" viewBox="0 0 16 16"><path d="M3 13q-4-2-1-5 0-4 4-4 3 0 4 3 5-1 5 3 0 3-3 3z" fill="#8d9297"/><path d="M2 2l13 12" stroke="#fff"/></svg>
            <svg className="mr-[9px] h-4 w-4" viewBox="0 0 16 16" fill="none" stroke="#fff" strokeWidth="1.200"><rect x="2.500" y="4.500" width="8" height="7" rx="1"/><path d="M10.500 7l3-2v6l-3-2M4 2q3-2 6 0M4 14q3 2 6 0"/></svg>
            <svg className="mr-2 h-4 w-4" viewBox="0 0 16 16" fill="none" stroke="#fff"><path d="M2 14Q3 4 14 3M5 14q1-7 9-8M8 14q1-4 6-5" opacity=".9"/><circle cx="12.500" cy="13" r="1.500" fill="#fff"/></svg>
            <svg className="mr-[10px] h-4 w-4" viewBox="0 0 16 16" fill="none" stroke="#fff"><path d="M.5 6h2.500L7 2.500v11L3 10H.5zM9 6q1.500 2 0 4M11 4q3 4 0 8"/><path d="M13 2.500q4 5.500 0 11" opacity=".5"/></svg>
            <span className="w-9 text-[12px]">ENG</span>
            <span className="w-[60px] text-center text-[11px] leading-[18px]">10:27 SA<br/>05/04/2022</span>
            <span className="relative ml-4 h-6 w-[30px]">
                <svg className="h-6 w-[30px]" viewBox="0 0 30 24"><path d="M1 3h16v13H8l-3 3v-3H1z" fill="#fff"/><path d="M4 7h10M4 10h10M4 13h6" stroke="#3a4048"/><circle cx="17" cy="17" r="8" fill="#32383f" stroke="#8a8f95"/></svg>
                <span className="absolute top-[10px] left-[10px] w-[14px] text-center text-[10px] leading-[14px] font-bold">21</span>
            </span>
            <span className="ml-[6px] h-full w-[5px] border-l border-[#7c8186]"/>
        </div>
    </footer>
);

const App: React.FC = () => {
    return (
        <div className="flex h-screen flex-col overflow-hidden bg-[#cbdbf1] font-['Liberation_Sans',Arial,sans-serif] text-[11px] leading-[16px] text-[#101820]">
            <div className="relative flex min-h-0 flex-1 flex-col">
                <HomeMenu/>
                <div className="flex min-h-0 flex-1 gap-[3px] pt-[3px] pb-[4px] pl-[3px]">
                    <Sidebar/>
                    <SalesList/>
                </div>
                <div className="flex h-[22px] shrink-0 items-center justify-between border border-[#7b9fce] bg-[#adc7e7] px-[3px]">
                    <span className="flex items-center gap-1">
                        <svg className="size-[14px]" viewBox="0 0 16 16"><path d="M3 1l10-1 3 2v12l-4 2H3z" fill="#8a8ed2" stroke="#5c60a8"/><path d="M4 4h7M4 7h7" stroke="#d9dbf5"/><circle cx="6" cy="11" r="5" fill="#35b23a"/><path d="M3.500 11l2 2 3.500-4" fill="none" stroke="#fff" strokeWidth="1.500"/></svg>
                        <span>Máy chủ: DESKTOP-D7UJNHJ\MISASME2017</span>
                    </span>
                    <span>05/04/2022</span>
                </div>
                <SaleWindow/>
                <MessageBox/>
            </div>
            <Taskbar/>
        </div>
    );
};

export default App;
